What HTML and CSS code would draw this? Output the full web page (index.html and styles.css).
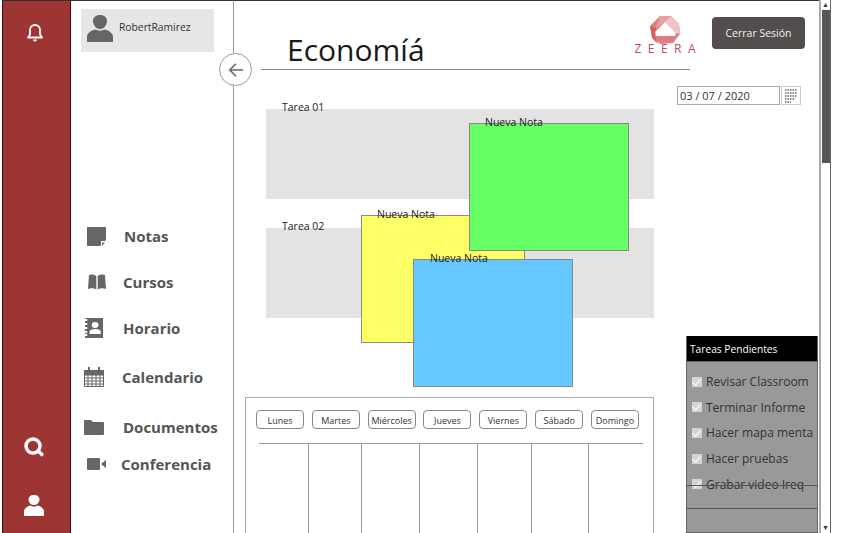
FILE: index.html
```html
<!DOCTYPE html>
<html>
<head>
    <title>Economia</title>
    <link rel="stylesheet" href="styles.css">
</head>
<body>
    <div class="frame">
        <!-- Red icon rail -->
        <div class="rail">
            <svg width="18" height="20" viewBox="0 0 18 20"><path d="M9 2a5 5 0 0 0-5 5v4.500l-2 3h14l-2-3V7a5 5 0 0 0-5-5z" fill="none" stroke="#fff" stroke-width="1.800" stroke-linejoin="round"/><path d="M7 16.500h4a2 2 0 0 1-4 0zM8 1h2v2H8z" fill="#fff"/></svg>
            <div class="rail-bottom">
                <svg width="22" height="22" viewBox="0 0 22 22"><circle cx="10" cy="10" r="7" fill="none" stroke="#fff" stroke-width="3.400"/><path d="M14 14l6 5.500" stroke="#fff" stroke-width="3.400"/></svg>
                <svg width="22" height="22" viewBox="0 0 22 22"><path d="M11 1c3.500 0 5.500 2 5.500 4.500S14.500 11 11 11 5.500 8 5.500 5.500 7.500 1 11 1zM1 22v-4c0-4 4-6 6-6.500 2.500 1.500 5.500 1.500 8 0 2 .5 6 2.500 6 6.500v4z" fill="#fff"/></svg>
            </div>
        </div>

        <!-- Side menu -->
        <div class="side">
            <div class="user">
                <svg width="28" height="28" viewBox="0 0 28 28"><path d="M14 0c4.500 0 7 2.500 7 6s-2.500 8-7 8-7-4.500-7-8 2.500-6 7-6zM1 27v-5c0-4 4-6.500 8-7.500 3 1.500 7 1.500 10 0 4 1 8 3.500 8 7.500v5z" fill="#666"/></svg>
                <span>RobertRamirez</span>
            </div>
            <ul class="menu">
                <li class="menu-notas">
                    <svg width="20" height="20" viewBox="0 0 20 20"><path d="M1 1h19v13l-6 6H1z" fill="#666"/><path d="M15 20v-5h5z" fill="#fff"/><path d="M16 20v-3.500h3z" fill="#666"/></svg>
                    <span>Notas</span>
                </li>
                <li class="menu-cursos">
                    <svg width="20" height="18" viewBox="0 0 20 18"><path d="M9.300 3C8 1.500 4 1 2 2L1 16c2-1 6-1 8.300.500zM10.700 3c1.300-1.500 5.300-2 7.300-1l1 14c-2-1-6-1-8.300.500z" fill="#666"/></svg>
                    <span>Cursos</span>
                </li>
                <li class="menu-horario">
                    <svg width="18" height="20" viewBox="3 0 16 20" preserveAspectRatio="none"><path d="M3 0h16v20H3v-2h2v-2H3v-1h2v-2H3v-2h2V9H3V7h2V5H3V3h2V1H3z" fill="#666"/><circle cx="12" cy="7" r="3" fill="#fff"/><path d="M7 16v-2c0-2 2-3 5-3s5 1 5 3v2z" fill="#fff"/></svg>
                    <span>Horario</span>
                </li>
                <li class="menu-calendario">
                    <svg width="20" height="20" viewBox="0 0 20 20"><path d="M.5 3v16.500h19V3M0 8h20M0 11h20M0 14h20M0 17h20M4 8v11M8 8v11M12 8v11M16 8v11" fill="none" stroke="#666"/><path d="M0 3h20v5H0z" fill="#666"/><path d="M5 0v4M15 0v4" stroke="#666" stroke-width="2"/></svg>
                    <span>Calendario</span>
                </li>
                <li class="menu-documentos">
                    <svg width="20" height="15" viewBox="0 0 20 15"><path d="M1 0h6l2 2h10a1 1 0 0 1 1 1v11a1 1 0 0 1-1 1H1a1 1 0 0 1-1-1V1a1 1 0 0 1 1-1z" fill="#666"/></svg>
                    <span>Documentos</span>
                </li>
                <li class="menu-conferencia">
                    <svg width="20" height="12" viewBox="0 0 20 12"><rect width="13" height="12" rx="1" fill="#666"/><path d="M14 6l5-4v8z" fill="#666"/></svg>
                    <span>Conferencia</span>
                </li>
            </ul>
        </div>

        <!-- Main content -->
        <div class="main">
            <button class="back">
                <svg width="16" height="16" viewBox="0 0 18 18"><path d="M9 2L2 9l7 7M2 9h15" fill="none" stroke="#666" stroke-width="1.800"/></svg>
            </button>

            <div class="top">
                <h1>Economíá</h1>
                <div class="logo">
                    <svg width="30" height="30" viewBox="0 0 30 30"><path d="M10 1h11l8 8 1 10-7 9-13 1-8-8L0 11z" fill="#df7f80"/><path d="M10 1h11l-6 6-9 6z" fill="#e7a0a0"/><path d="M21 1l8 8 1 10-4-1-11-11z" fill="#f0c4c4"/><path d="M0 11l6 2-1 8 3 8-6-6z" fill="#d55f5f"/><path d="M15 7l11 11-1 3H6l-1-4z" fill="#fff"/></svg>
                    <span>ZEERA</span>
                </div>
                <button class="logout">Cerrar Sesión</button>
            </div>

            <div class="date-row">
                <div class="date-input">03 / 07 / 2020</div>
                <div class="date-btn">
                    <svg width="14" height="14" viewBox="0 0 14 14"><path d="M1 1h12M1 4h12M1 7h12M1 10h9M1 13h6" stroke="#666" stroke-width="1.500" stroke-dasharray="1.500 1" fill="none"/></svg>
                </div>
            </div>

            <!-- Task bands with notes lying over them -->
            <div class="board">
                <div class="band"><span>Tarea 01</span></div>
                <div class="band"><span>Tarea 02</span></div>
                <div class="note note-yellow"><span>Nueva Nota</span></div>
                <div class="note note-blue"><span>Nueva Nota</span></div>
                <div class="note note-green"><span>Nueva Nota</span></div>
            </div>

            <!-- Week view -->
            <div class="week">
                <div class="days">
                    <button>Lunes</button>
                    <button>Martes</button>
                    <button>Miércoles</button>
                    <button>Jueves</button>
                    <button>Viernes</button>
                    <button>Sábado</button>
                    <button>Domingo</button>
                </div>
                <div class="columns">
                    <div style="width: 50px"></div>
                    <div style="width: 53px"></div>
                    <div style="width: 58px"></div>
                    <div style="width: 58px"></div>
                    <div style="width: 54px"></div>
                    <div style="width: 57px"></div>
                    <div style="width: 54px"></div>
                </div>
            </div>

            <div class="tasks">
                <div class="tasks-title">Tareas Pendientes</div>
                <div class="tasks-list">
                    <div class="task"><span class="check"></span>Revisar Classroom</div>
                    <div class="task"><span class="check"></span>Terminar Informe</div>
                    <div class="task"><span class="check"></span>Hacer mapa menta</div>
                    <div class="task"><span class="check"></span>Hacer pruebas</div>
                    <div class="task"><span class="check"></span>Grabar video Ireq</div>
                </div>
                <div class="tasks-strike"></div>
                <div class="tasks-rule"></div>
            </div>
        </div>

        <!-- Scrollbar -->
        <div class="scroll">
            <div class="scroll-btn">&#9650;</div>
            <div class="scroll-thumb"></div>
            <div class="scroll-track"></div>
            <div class="scroll-btn">&#9660;</div>
        </div>
    </div>
</body>
</html>
```

FILE: styles.css
```css
html, body {
    margin: 0;
    padding: 0;
    background-color: #fff;
    overflow: hidden;
}

body {
    font-family: "Open Sans", "Noto Sans", sans-serif;
    color: #333;
}

.frame {
    display: flex;
    width: 847px;
    height: 533px;
    overflow: hidden;
    box-sizing: border-box;
    padding-left: 2px;
}

.rail {
    width: 69px;
    flex: none;
    box-sizing: border-box;
    background-color: #9e3535;
    border-left: 1px solid #3a1010;
    border-right: 1px solid #3a1010;
    border-top: 1px solid #333;
    display: flex;
    flex-direction: column;
    align-items: center;
    justify-content: space-between;
    padding: 22px 4px 17px 0;
}

.rail-bottom {
    display: flex;
    flex-direction: column;
    align-items: center;
    gap: 36px;
    margin-right: 2px;
}

.side {
    width: 163px;
    flex: none;
    box-sizing: border-box;
    border-right: 1px solid #999;
    border-top: 1px solid #333;
    padding: 8px 0 0 10px;
}

.user {
    width: 133px;
    height: 43px;
    background-color: #e6e6e6;
    display: flex;
    align-items: flex-start;
    gap: 5px;
    padding: 6px 0 0 5px;
    box-sizing: border-box;
    font-size: 10.300px;
    color: #333;
}

.user span {
    margin-top: 5px;
}

.menu {
    list-style: none;
    margin: 173px 0 0;
    padding: 0;
    font-weight: 700;
    font-size: 15px;
    color: #555;
}

.menu li {
    display: flex;
    align-items: center;
    height: 22px;
}

.menu svg {
    flex: none;
}

.menu-notas { padding-left: 5px; gap: 18px; }
.menu-cursos { padding-left: 6px; gap: 16px; margin-top: 24px; }
.menu-horario { padding-left: 4px; gap: 20px; margin-top: 24px; }
.menu-calendario { padding-left: 3px; gap: 18px; margin-top: 27px; }
.menu-documentos { padding-left: 3px; gap: 19px; margin-top: 28px; }
.menu-conferencia { padding-left: 6px; gap: 14px; margin-top: 15px; }

.main {
    position: relative;
    width: 585px;
    flex: none;
    box-sizing: border-box;
    border-top: 1px solid #333;
}

.back {
    position: absolute;
    left: -15px;
    top: 52px;
    width: 33px;
    height: 33px;
    padding: 0;
    border: 1px solid #999;
    border-radius: 50%;
    background-color: #fff;
    display: flex;
    align-items: center;
    justify-content: center;
}

.top {
    height: 69px;
    margin-left: 27px;
    display: flex;
    position: relative;
}

.top h1 {
    width: 429px;
    height: 69px;
    box-sizing: border-box;
    margin: 0;
    padding: 29px 0 0 26px;
    border-bottom: 1px solid #888;
    font-size: 30px;
    font-weight: 400;
    line-height: 39px;
    color: #1a1a1a;
    white-space: nowrap;
}

.logo {
    position: absolute;
    left: 371px;
    top: 14px;
    width: 66px;
    display: flex;
    flex-direction: column;
    align-items: center;
    color: #c4475a;
    font-size: 12px;
    line-height: 12px;
    letter-spacing: 6.500px;
}

.logo span {
    margin-top: -2px;
    margin-right: -6.500px;
}

.logout {
    position: absolute;
    left: 451px;
    top: 16px;
    width: 93px;
    height: 32px;
    background-color: #544d4d;
    color: #f0f0f0;
    border: none;
    border-radius: 4px;
    font-family: inherit;
    font-size: 10.500px;
    padding: 0 0 1px;
}

.date-row {
    display: flex;
    gap: 1px;
    margin: 16px 0 0 443px;
    height: 19px;
}

.date-input {
    width: 103px;
    box-sizing: border-box;
    border: 1px solid #aaa;
    font-size: 11px;
    line-height: 17px;
    padding-left: 2px;
    color: #333;
}

.date-btn {
    width: 20px;
    box-sizing: border-box;
    border: 1px solid #ccc;
    display: flex;
    align-items: center;
    justify-content: center;
}

.board {
    position: relative;
    margin: 4px 0 0 32px;
    height: 288px;
    width: 388px;
    font-size: 10.500px;
    line-height: 14px;
    color: #222;
}

.band {
    position: relative;
    height: 90px;
    background-color: #e3e3e3;
    margin-bottom: 29px;
}

.band span {
    position: absolute;
    left: 16px;
    top: -9px;
}

.note {
    position: absolute;
    box-sizing: border-box;
    border: 1px solid #888;
}

.note span {
    position: absolute;
    left: 15px;
    top: -9px;
    white-space: nowrap;
}

.note-green {
    left: 203px;
    top: 14px;
    width: 160px;
    height: 128px;
    background-color: #66ff66;
}

.note-yellow {
    left: 95px;
    top: 106px;
    width: 164px;
    height: 128px;
    background-color: #ffff66;
}

.note-blue {
    left: 147px;
    top: 150px;
    width: 160px;
    height: 128px;
    background-color: #66c8ff;
}

.note-blue span {
    left: 16px;
}

.week {
    margin-left: 11px;
    width: 409px;
    height: 140px;
    box-sizing: border-box;
    border: 1px solid #aaa;
    padding: 12px 0 0 10px;
}

.days {
    display: flex;
    gap: 7.830px;
}

.days button {
    width: 48px;
    height: 19px;
    padding: 1px 0 0;
    box-sizing: border-box;
    background-color: #fff;
    border: 1px solid #888;
    border-radius: 4px;
    font-family: inherit;
    font-size: 9px;
    color: #333;
}

.columns {
    display: flex;
    margin: 14px 0 0 3px;
    width: 384px;
    height: 100px;
    border-top: 1px solid #999;
}

.columns div {
    flex: none;
    box-sizing: border-box;
    border-right: 1px solid #999;
    height: 100px;
}

.columns div:last-child {
    border-right: none;
}

.tasks {
    position: absolute;
    left: 452px;
    top: 335px;
    width: 132px;
    height: 197px;
    box-sizing: border-box;
    background-color: #999;
    border: 1px solid #666;
    border-top: none;
    overflow: hidden;
}

.tasks-title {
    height: 25px;
    background-color: #000;
    color: #fff;
    font-size: 10.200px;
    line-height: 26px;
    padding-left: 3px;
    border-bottom: 1px solid #666;
}

.tasks-list {
    padding: 7px 0 0 5px;
    font-size: 12px;
    color: #333;
}

.task {
    display: flex;
    align-items: center;
    height: 25.600px;
    white-space: nowrap;
}

.check {
    position: relative;
    flex: none;
    width: 10px;
    height: 10px;
    margin-right: 4px;
    background-color: #d4d4d4;
}

.check::after {
    content: "";
    position: absolute;
    left: 2px;
    top: 0;
    width: 4px;
    height: 7px;
    border-right: 1px solid #fff;
    border-bottom: 1px solid #fff;
    transform: rotate(40deg);
}

.tasks-strike,
.tasks-rule {
    position: absolute;
    left: 0;
    right: 0;
    height: 1px;
    background-color: #555;
}

.tasks-strike {
    top: 149px;
}

.tasks-rule {
    top: 172px;
}

.scroll {
    width: 12px;
    flex: none;
    display: flex;
    flex-direction: column;
    border-left: 2px solid #aaa;
    border-right: 1px solid #666;
    box-sizing: border-box;
}

.scroll-btn {
    height: 10px;
    font-size: 7px;
    line-height: 10px;
    text-align: center;
    color: #333;
    background-color: #fff;
}

.scroll-thumb {
    height: 153px;
    background-color: #555;
    margin-left: 1px;
}

.scroll-track {
    flex: 1;
    background-color: #fff;
}
```
